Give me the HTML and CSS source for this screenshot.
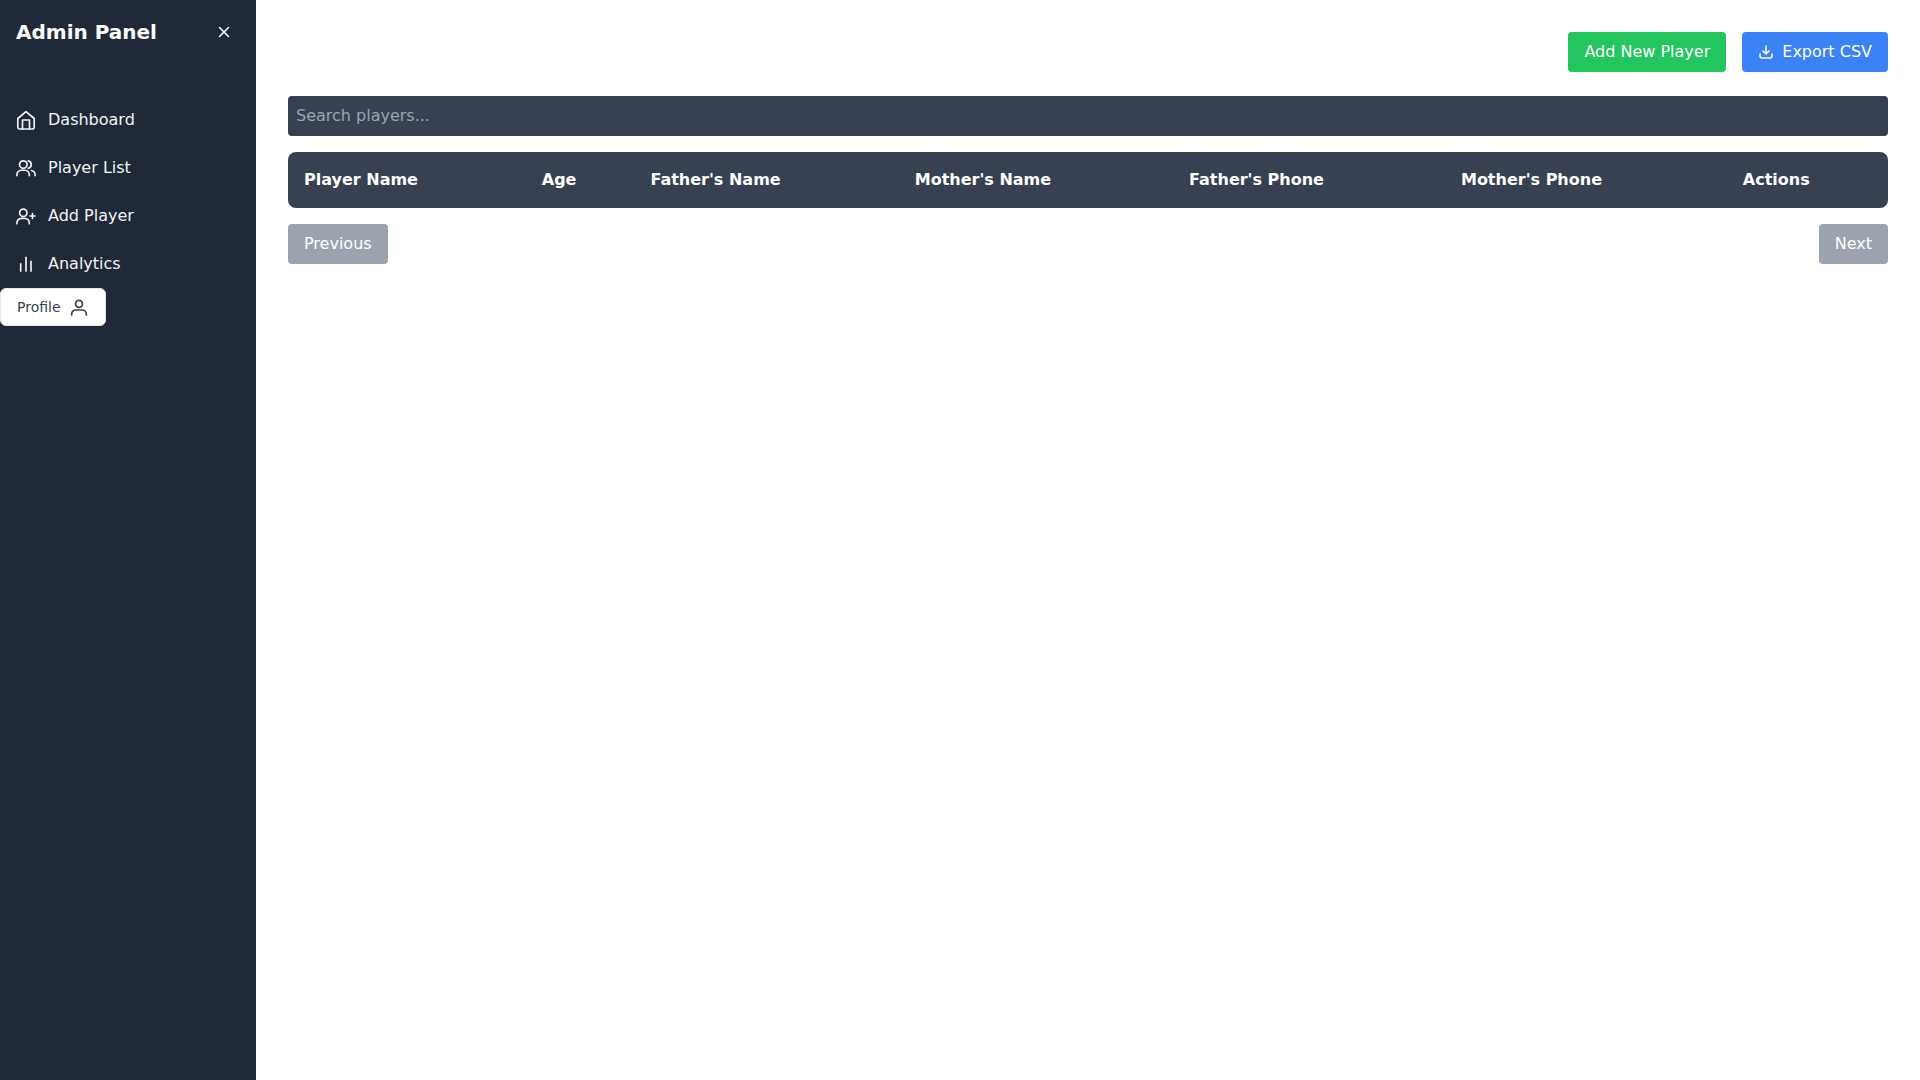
FILE: index.html
```html
<!DOCTYPE html>
<html lang="en">
<head>
<meta charset="utf-8">
<title>Admin Panel</title>
<link rel="stylesheet" href="styles.css">
</head>
<body>
<div class="app">
  <aside class="sidebar">
    <div class="brand">
      <h1 class="brand-title">Admin Panel</h1>
      <button class="close-btn" aria-label="Close">
        <svg class="close-icon" viewBox="0 0 24 24" fill="none" stroke="currentColor" stroke-width="2" stroke-linecap="round" stroke-linejoin="round"><path d="M6 18 18 6M6 6l12 12"/></svg>
      </button>
    </div>
    <nav class="nav">
      <a class="nav-item"><svg class="icon" viewBox="0 0 20 20" fill="none" stroke="currentColor" stroke-width="1.650" stroke-linecap="round" stroke-linejoin="round"><path d="M1.800 8.500 10 1.700l8.200 6.800V17a2 2 0 0 1-2 2H3.800a2 2 0 0 1-2-2z"/><path d="M6.500 19v-9h7v9"/></svg><span>Dashboard</span></a>
      <a class="nav-item"><svg class="icon" viewBox="0 0 20 20" fill="none" stroke="currentColor" stroke-width="1.650" stroke-linecap="round" stroke-linejoin="round"><circle cx="7.300" cy="6.600" r="3.800"/><path d="M.9 17.700v-1a4.500 4.500 0 0 1 4.500-4.500h3.400a4.500 4.500 0 0 1 4.500 4.500v1"/><path d="M12.300 2.900a3.800 3.800 0 0 1 0 7.400"/><path d="M15.500 12.500a4.500 4.500 0 0 1 3.600 4.400v.8"/></svg><span>Player List</span></a>
      <a class="nav-item"><svg class="icon" viewBox="0 0 20 20" fill="none" stroke="currentColor" stroke-width="1.650" stroke-linecap="round" stroke-linejoin="round"><circle cx="7.300" cy="6.800" r="3.700"/><path d="M.9 17.800v-1a4.500 4.500 0 0 1 4.500-4.500h3.400a4.500 4.500 0 0 1 4.500 4.500v1"/><path d="M16.500 7.500v5M14 10h5"/></svg><span>Add Player</span></a>
      <a class="nav-item"><svg class="icon" viewBox="0 0 20 20" fill="none" stroke="currentColor" stroke-width="1.650" stroke-linejoin="round"><path d="M4.700 17.700V9.300M10 17.700V2.700M15 17.700V6.700"/></svg><span>Analytics</span></a>
    </nav>
    <button class="profile-btn"><span>Profile</span><svg class="icon-profile" viewBox="0 0 20 20" fill="none" stroke="currentColor" stroke-width="1.700" stroke-linecap="round" stroke-linejoin="round"><circle cx="10" cy="6.800" r="3.500"/><path d="M2.700 18v-1a4 4 0 0 1 4-4h6.600a4 4 0 0 1 4 4v1"/></svg></button>
  </aside>
  <main class="main">
    <div class="actions">
      <button class="btn btn-green">Add New Player</button>
      <button class="btn btn-blue"><svg class="icon-dl" viewBox="0 0 24 24" fill="none" stroke="currentColor" stroke-width="2.300" stroke-linecap="round" stroke-linejoin="round"><path d="M12 3v12M7.500 10.500 12 15l4.500-4.500"/><path d="M3 15v3a3 3 0 0 0 3 3h12a3 3 0 0 0 3-3v-3"/></svg>Export CSV</button>
    </div>
    <input class="search" type="text" placeholder="Search players...">
    <table class="table">
      <thead>
        <tr>
          <th>Player Name</th><th>Age</th><th>Father's Name</th><th>Mother's Name</th><th>Father's Phone</th><th>Mother's Phone</th><th>Actions</th>
        </tr>
      </thead>
    </table>
    <div class="pager">
      <button class="btn btn-gray">Previous</button>
      <button class="btn btn-gray">Next</button>
    </div>
  </main>
</div>
</body>
</html>
```
FILE: styles.css
```css
* { box-sizing: border-box; }
html, body { margin: 0; height: 100%; }
body { font-family: "DejaVu Sans", sans-serif; font-size: 16px; line-height: 24px; background: #fff; color: #000; }
button { font: inherit; border: 0; cursor: pointer; }
.app { display: flex; height: 1080px; }
.sidebar { width: 256px; flex: none; background: #1f2937; color: #fff; }
.brand { display: flex; justify-content: space-between; align-items: center; height: 64px; padding: 0 16px; }
.brand-title { margin: 0; font-size: 20px; line-height: 28px; font-weight: 700; }
.close-btn { background: none; color: #fff; padding: 0; width: 24px; height: 24px; display: flex; align-items: center; justify-content: center; margin-right: 4px; }
.close-icon { width: 18px; height: 18px; }
.nav { margin-top: 32px; display: flex; flex-direction: column; }
.nav-item { display: flex; align-items: center; gap: 12px; height: 48px; padding: 0 16px; color: #f3f4f6; }
.icon { width: 20px; height: 20px; flex: none; }
.profile-btn { display: flex; align-items: center; gap: 8px; background: #fff; color: #374151; width: 106px; height: 38px; padding: 0 0 0 16px; border-radius: 6px; font-size: 14px; line-height: 20px; border: 1px solid #e5e7eb; }
.icon-profile { width: 20px; height: 20px; flex: none; }
.main { flex: 1; padding: 32px; }
.actions { display: flex; justify-content: flex-end; gap: 16px; margin-bottom: 24px; }
.btn { display: inline-flex; align-items: center; height: 40px; padding: 0 16px; border-radius: 4px; color: #fff; }
.btn-green { background: #22c55e; }
.btn-blue { background: #3b82f6; }
.btn-gray { background: #9ca3af; }
.icon-dl { width: 16px; height: 16px; margin-right: 8px; }
.search { display: block; width: 100%; height: 40px; padding: 7px 8px 9px; margin-bottom: 16px; border: 0; border-radius: 4px; background: #374151; color: #fff; font: inherit; }
.search::placeholder { color: #9ca3af; opacity: 1; }
.table { width: 100%; border-collapse: collapse; background: #374151; color: #fff; border-radius: 8px; overflow: hidden; }
.table th { height: 56px; padding: 12px 16px; text-align: left; font-weight: 700; }
.pager { display: flex; justify-content: space-between; margin-top: 16px; }
```
